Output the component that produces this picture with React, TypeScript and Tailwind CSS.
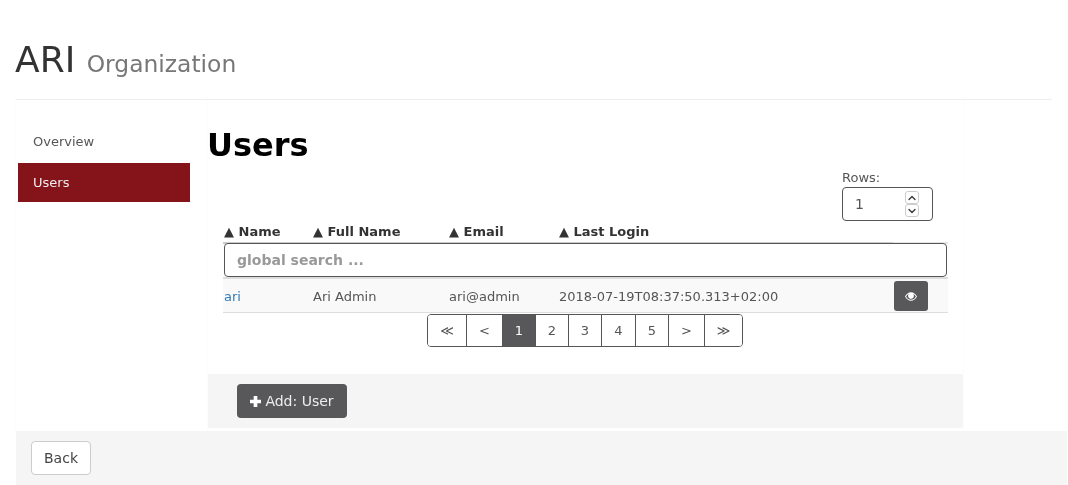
import React from 'react'
import { ChevronUp, ChevronDown } from 'lucide-react'

const columns = [
  { label: 'Name', width: 'w-[89px]' },
  { label: 'Full Name', width: 'w-[136px]' },
  { label: 'Email', width: 'w-[110px]' },
  { label: 'Last Login', width: 'w-[335px]' },
]

const pages = [
  { label: '≪', width: 'w-[38px]' },
  { label: '<', width: 'w-[36px]' },
  { label: '1', width: 'w-[33px]', active: true },
  { label: '2', width: 'w-[33px]' },
  { label: '3', width: 'w-[33px]' },
  { label: '4', width: 'w-[34px]' },
  { label: '5', width: 'w-[33px]' },
  { label: '>', width: 'w-[36px]' },
  { label: '≫', width: 'w-[38px]' },
]

function EyeIcon() {
  return (
    <svg viewBox="0 0 14 10" className="w-3 h-[9px]" fill="#fff">
      <path fillRule="evenodd" d="M7 0C4 0 1.6 2 0 5c1.6 3 4 5 7 5s5.400-2 7-5c-1.600-3-4-5-7-5zM1.300 5C2.200 3.500 3.300 2.300 4.700 1.600 4 2.300 3.600 3.100 3.600 4.200 3.600 6.200 5.100 7.800 7 7.800s3.400-1.600 3.400-3.600c0-1.100-.4-1.900-1.100-2.600 1.400.7 2.500 1.900 3.400 3.400C11.500 7.400 9.400 8.900 7 8.900S2.500 7.400 1.300 5z" />
    </svg>
  )
}

export default function App() {
  return (
    <div className="w-[1068px] h-[485px] overflow-hidden will-change-transform font-['DejaVu_Sans',sans-serif] text-[13px] text-[#555]">
      {/* Header */}
      <div className="ml-4 mr-4 w-[1036px] h-[100px] pt-[40px] border-b border-[#eeeeee]">
        <h1 className="text-[36px] leading-[40px] text-[#333] -ml-[1px]">
          ARI <small className="text-[23.400px] text-[#777]">Organization</small>
        </h1>
      </div>

      <div className="flex h-[331px] ml-[15px] pl-[2px] border-l border-[#fcfcfc]">
        {/* Sidebar */}
        <nav className="w-[172px] pt-[21px] shrink-0">
          <div className="h-[42px] pl-[15px] flex items-center text-[#555]">Overview</div>
          <div className="h-[39px] pl-[15px] flex items-center text-[#eee] bg-[#85141a]">Users</div>
        </nav>

        {/* Content */}
        <main className="ml-[17px] w-[757px] flex flex-col border-x border-[#fcfcfc]">
          <h2 className="mt-[25px] -ml-[1px] text-[32px] leading-[40px] font-bold text-black">Users</h2>

          <div className="h-[6px]" />
          <div className="ml-[634px] w-[91px]">
            <div className="text-[13px] leading-[14px] h-[16px] text-[#555]">Rows:</div>
            <div className="h-[34px] border border-[#555] rounded-[4px] flex items-center pl-[12px] pr-[13px] text-[14px] text-[#555]">
              <span className="flex-1">1</span>
              <span className="flex flex-col text-[#333]">
                <span className="w-[14px] h-[13px] border border-[#ccc] rounded-[3px] flex items-center justify-center">
                  <ChevronUp className="w-3 h-3" strokeWidth={2.5} />
                </span>
                <span className="w-[14px] h-[13px] border border-[#ccc] rounded-[3px] flex items-center justify-center">
                  <ChevronDown className="w-3 h-3" strokeWidth={2.5} />
                </span>
              </span>
            </div>
          </div>

          {/* Table */}
          <div className="ml-[15px] w-[725px]">
            <div className="flex h-[20px] items-end pb-[1px] mb-[1px] font-bold text-[#333]">
              {columns.map(col => (
                <div key={col.label} className={`${col.width} leading-[16px] pl-[1px]`}>
                  ▲ {col.label}
                </div>
              ))}
            </div>
            <div className="flex h-[2px]">
              <div className="w-[670px] bg-[#ccc]" />
              <div className="flex-1 bg-[#e5e5e5]" />
            </div>
            <div className="mx-[1px] h-[34px] -mt-[1px] border border-[#555] rounded-[4px] bg-white flex items-center pl-[12px] font-bold text-[#999] text-[14px] relative">
              global search ...
            </div>
            <div className="h-[2px] bg-[#ddd]" />
            <div className="flex items-center h-[34px] bg-[#f9f9f9] border-b border-[#ddd] relative">
              <div className="w-[89px] pl-[1px] pt-[2px] text-[#337ab7]">ari</div>
              <div className="w-[136px] pl-[1px] pt-[2px]">Ari Admin</div>
              <div className="w-[110px] pl-[1px] pt-[2px]">ari@admin</div>
              <div className="w-[336px] pl-[1px] pt-[2px]">2018-07-19T08:37:50.313+02:00</div>
              <button className="w-[34px] h-[30px] mt-[1px] bg-[#58585a] rounded-[3px] flex items-center justify-center">
                <EyeIcon />
              </button>
            </div>
            <div className="flex justify-center mt-[1px] pr-[1px]">
              <div className="flex h-[33px] border border-[#555] rounded-[4px] overflow-hidden">
                {pages.map((p, i) => (
                  <div
                    key={p.label}
                    className={`${p.width} flex items-center justify-center ${i > 0 ? 'border-l border-[#555]' : ''} ${p.active ? 'bg-[#58585a] text-white' : 'bg-white text-[#555]'}`}
                  >
                    {p.label}
                  </div>
                ))}
              </div>
            </div>
          </div>

          {/* Panel footer */}
          <div className="mt-[27px] h-[54px] bg-[#f5f5f5] pl-[29px] pt-[10px]">
            <button className="w-[110px] h-[34px] bg-[#58585a] rounded-[4px] text-[#eee] text-[14px] flex items-center justify-center gap-[4px]">
              <svg viewBox="0 0 12 12" className="w-[11px] h-[11px]" fill="#fff">
                <path d="M4 0h4v4h4v4H8v4H4V8H0V4h4z" />
              </svg>
              Add: User
            </button>
          </div>
        </main>
      </div>

      {/* Footer */}
      <div className="ml-4 w-[1051px] h-[54px] bg-[#f5f5f5] pl-[15px] pt-[10px]">
        <button className="w-[60px] h-[34px] bg-white border border-[#ccc] rounded-[4px] text-[14px] text-[#444]">Back</button>
      </div>
    </div>
  )
}
